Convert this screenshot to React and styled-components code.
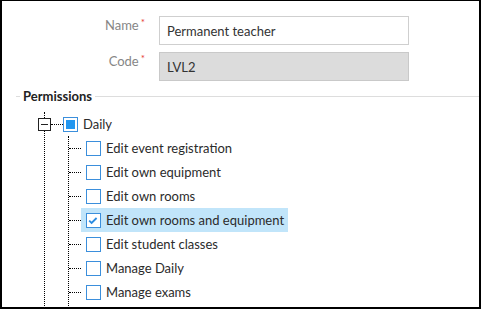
import React from "react";
import styled, { createGlobalStyle } from "styled-components";

const Global = createGlobalStyle`
  html, body { margin: 0; padding: 0; background: #fff; }
  body { font-family: Lato, "Open Sans", "Liberation Sans", sans-serif; }
`;

const Frame = styled.div`
  box-sizing: border-box;
  width: 481px;
  height: 309px;
  border: 2px solid #000;
  border-top-width: 1px;
  overflow: hidden;
  background: #fff;
`;

const Form = styled.div`
  display: grid;
  grid-template-columns: 143px 250px;
  column-gap: 14px;
  row-gap: 7px;
  padding-top: 15px;
`;

const Label = styled.div`
  text-align: right;
  font-size: 13px;
  line-height: 18px;
  color: #868686;
`;

const Required = styled.span`
  color: #e53935;
  font-size: 10px;
  vertical-align: top;
  line-height: 12px;
  margin-left: 2px;
`;

const Input = styled.div`
  box-sizing: border-box;
  height: 29px;
  border: 1px solid ${(p) => (p.$disabled ? "#c9c9c9" : "#cfcfcf")};
  background: ${(p) => (p.$disabled ? "#dcdcdc" : "#fff")};
  padding-left: 7px;
  display: flex;
  align-items: center;
  font-size: 13px;
  color: #333;
`;

const LegendRow = styled.div`
  display: flex;
  align-items: center;
  height: 16px;
  margin: 7px 0 0 14px;
  &::before {
    content: "";
    width: 4px;
    border-top: 1px solid #ddd;
    margin-right: 3px;
  }
  &::after {
    content: "";
    flex: 1;
    border-top: 1px solid #ddd;
    margin-left: 3px;
  }
`;

const Legend = styled.span`
  font-size: 13px;
  font-weight: 700;
  color: #222;
`;

const Tree = styled.div`
  margin: 8px 0 0 42px;
  border-left: 1px dotted #000;
`;

const RootRow = styled.div`
  display: flex;
  align-items: center;
  height: 24px;
  margin-left: -7px;
`;

const Expander = styled.div`
  box-sizing: border-box;
  width: 13px;
  height: 13px;
  border: 1px solid #222;
  background: #fff;
  display: flex;
  align-items: center;
  justify-content: center;
  &::after {
    content: "";
    width: 7px;
    border-top: 1px solid #222;
  }
`;

const HLine = styled.div`
  width: ${(p) => p.$w}px;
  border-top: 1px dotted #000;
`;

const Children = styled.div`
  margin-left: 23px;
  padding-bottom: 12px;
  border-left: 1px dotted #000;
`;

const ChildRow = styled.div`
  display: flex;
  align-items: center;
  height: 24px;
`;

const Item = styled.div`
  display: flex;
  align-items: center;
  gap: 5px;
  height: 24px;
  padding: 0 4px 0 ${(p) => (p.$root ? 0 : 5)}px;
  background: ${(p) => (p.$selected ? "#c1e5fa" : "transparent")};
  font-size: 13px;
  color: #2b2b2b;
  white-space: nowrap;
`;

const Box = styled.div`
  box-sizing: border-box;
  width: 15px;
  height: 15px;
  border: 1px solid #3b8fdc;
  background: #fff;
  padding: 2px;
  display: flex;
  flex-shrink: 0;
`;

const Fill = styled.div`
  flex: 1;
  background: #2196f0;
`;

function Checkbox({ state }) {
  return (
    <Box>
      {state === "partial" && <Fill />}
      {state === "checked" && (
        <svg width="13" height="13" viewBox="0 0 13 13" style={{ margin: -2 }}>
          <polyline
            points="2.2,6.6 4.6,9 9.6,4"
            fill="none"
            stroke="#2a8be0"
            strokeWidth="1.8"
          />
        </svg>
      )}
    </Box>
  );
}

const children = [
  { label: "Edit event registration" },
  { label: "Edit own equipment" },
  { label: "Edit own rooms" },
  { label: "Edit own rooms and equipment", checked: true },
  { label: "Edit student classes" },
  { label: "Manage Daily" },
  { label: "Manage exams" },
];

export default function App() {
  return (
    <>
      <Global />
      <Frame>
        <Form>
          <Label>
            Name<Required>*</Required>
          </Label>
          <Input>Permanent teacher</Input>
          <Label>
            Code<Required>*</Required>
          </Label>
          <Input $disabled>LVL2</Input>
        </Form>
        <LegendRow>
          <Legend>Permissions</Legend>
        </LegendRow>
        <Tree>
          <RootRow>
            <Expander />
            <HLine $w={12} />
            <Item $root>
              <Checkbox state="partial" />
              Daily
            </Item>
          </RootRow>
          <Children>
            {children.map((c) => (
              <ChildRow key={c.label}>
                <HLine $w={12} />
                <Item $selected={c.checked}>
                  <Checkbox state={c.checked ? "checked" : "none"} />
                  {c.label}
                </Item>
              </ChildRow>
            ))}
          </Children>
        </Tree>
      </Frame>
    </>
  );
}
